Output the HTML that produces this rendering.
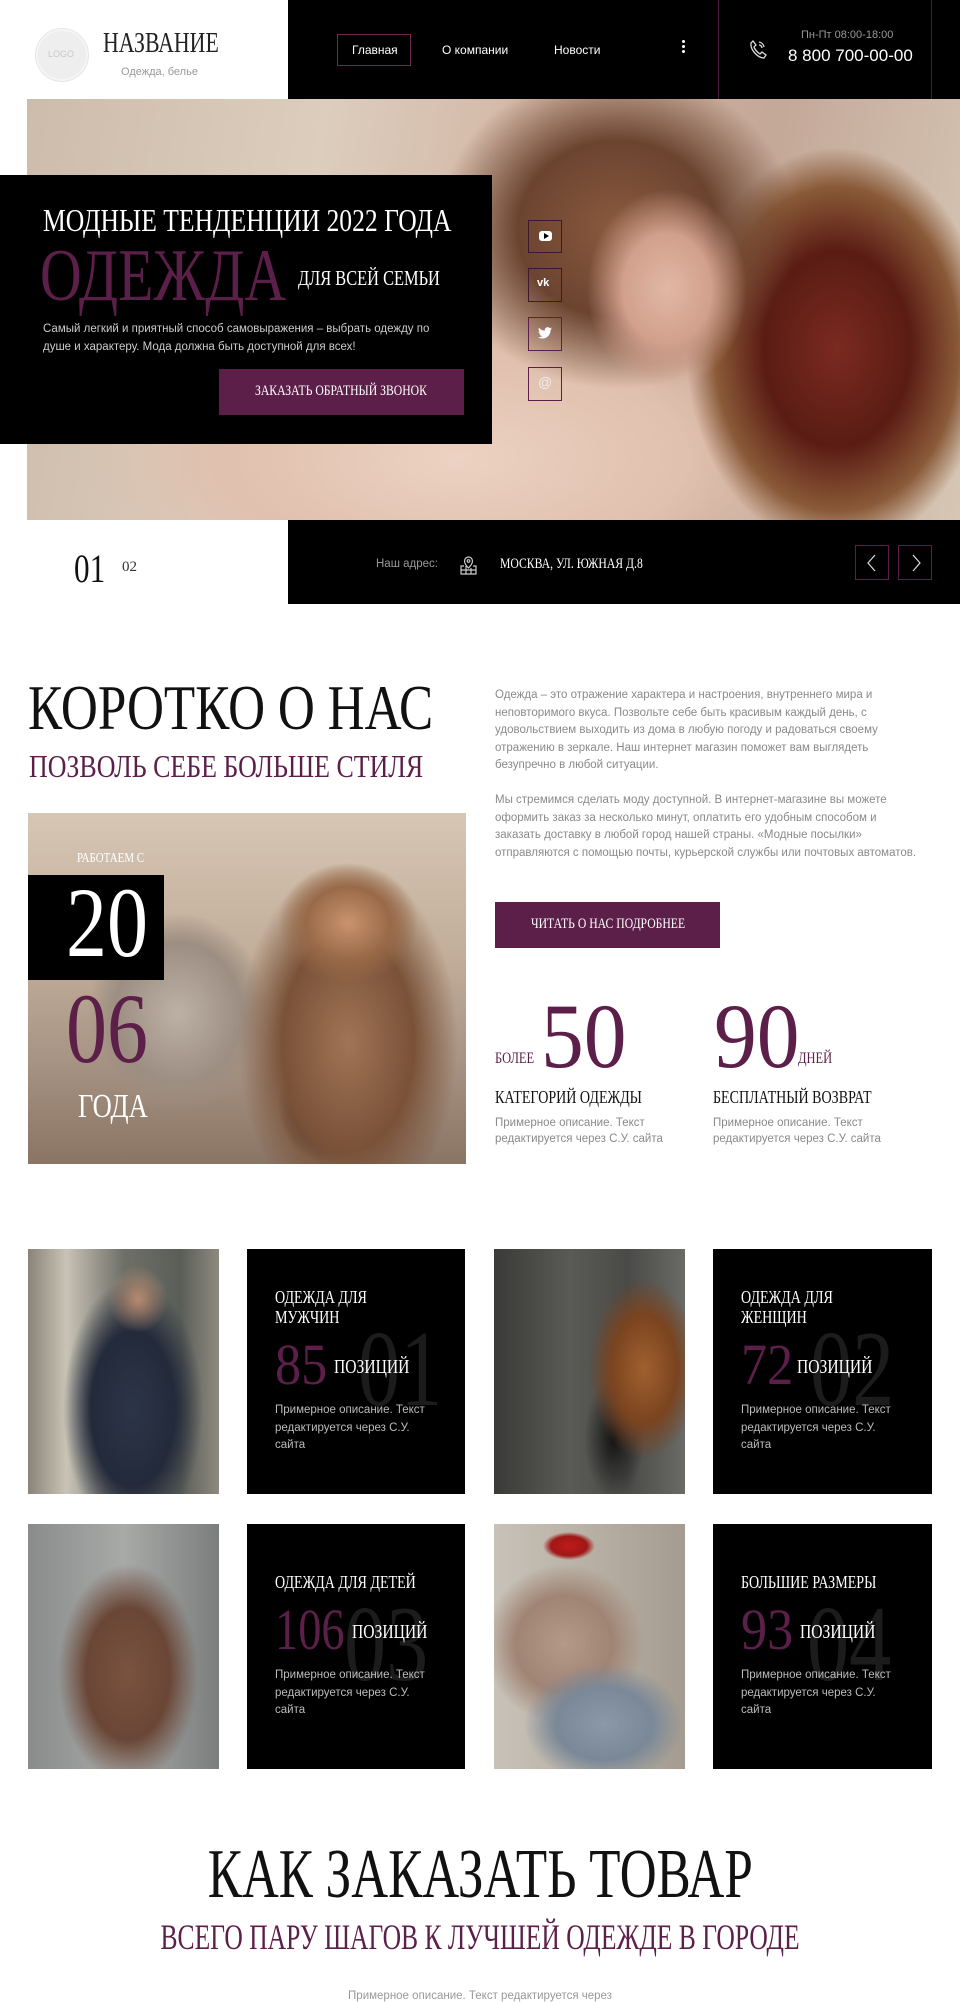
<!DOCTYPE html>
<html><head><meta charset="utf-8">
<style>
*{margin:0;padding:0;box-sizing:border-box}
body{width:960px;height:2000px;overflow:hidden;background:#fff;font-family:"Liberation Sans","Noto Sans CJK SC",sans-serif;position:relative}
.a{position:absolute}
.s{font-family:"Liberation Serif","Noto Serif CJK SC",serif;white-space:nowrap}
.c{display:inline-block;transform:scaleX(.78);transform-origin:0 50%}
.p{color:#5c1f49}
.g{color:#8a8a8a;font-size:11.5px;line-height:17.6px;white-space:nowrap}
.box{border:1px solid #5c1f49}
.card{background:#000}
</style></head><body>

<!-- header -->
<div class="a" style="left:0;top:0;width:288px;height:99px;background:#fff"></div>
<div class="a" style="left:36px;top:29px;width:52px;height:52px;border-radius:50%;background:#eee;border:2px solid #f5f5f5;box-shadow:0 0 0 1px #e6e6e6"></div>
<div class="a" style="left:48px;top:49px;font-size:9px;color:#c8c8c8">LOGO</div>
<div class="a s" style="left:103px;top:28px;font-size:28px;color:#222"><span class="c">НАЗВАНИЕ</span></div>
<div class="a" style="left:121px;top:66px;font-size:11px;color:#999">Одежда, белье</div>
<div class="a" style="left:288px;top:0;width:672px;height:99px;background:#000"></div>
<div class="a box" style="left:337px;top:34px;width:74px;height:32px;border-color:#6b2a52"></div>
<div class="a" style="left:352px;top:43px;font-size:12px;color:#fff">Главная</div>
<div class="a" style="left:442px;top:43px;font-size:12px;color:#fff">О компании</div>
<div class="a" style="left:554px;top:43px;font-size:12px;color:#fff">Новости</div>
<div class="a" style="left:682px;top:40px;width:3px;height:3px;background:#fff;border-radius:50%;box-shadow:0 5px 0 #fff,0 10px 0 #fff"></div>
<div class="a" style="left:718px;top:0;width:214px;height:99px;border-left:1px solid #4a1a3c;border-right:1px solid #4a1a3c"></div>
<svg class="a" style="left:749px;top:39px" width="18" height="20" viewBox="0 0 18 20" fill="none" stroke="#ddd" stroke-width="1.3"><path d="M4 2l3 4-2 2c1 3 3 5 6 7l2-2 4 3-2 3C9 19 1 11 2 4z"/><path d="M10 3a6 6 0 0 1 5 5M10 6a3 3 0 0 1 3 3"/></svg>
<div class="a" style="left:801px;top:29px;font-size:11px;color:#999">Пн-Пт 08:00-18:00</div>
<div class="a" style="left:788px;top:46px;font-size:17px;color:#fff">8 800 700-00-00</div>

<!-- hero image -->
<div class="a" style="left:27px;top:99px;width:933px;height:421px;overflow:hidden;background:
radial-gradient(ellipse 80px 100px at 640px 190px,#e0b8a4 0%,#d2a08c 55%,rgba(0,0,0,0) 100%),
radial-gradient(ellipse 180px 160px at 590px 130px,#8a5a3e 0%,#6b4430 55%,rgba(0,0,0,0) 100%),
radial-gradient(ellipse 210px 280px at 810px 250px,#7a2a20 0%,#5a1c14 35%,#8a5a38 58%,rgba(0,0,0,0) 72%),
radial-gradient(ellipse 380px 170px at 430px 360px,#ecd2c2 0%,#e0c0ae 60%,rgba(0,0,0,0) 100%),
linear-gradient(100deg,#cdbcab 0%,#dccdbd 30%,#d2b2a0 55%,#c4a898 75%,#d6c6b4 100%)"></div>

<!-- hero black box -->
<div class="a" style="left:0;top:175px;width:492px;height:269px;background:#000"></div>
<div class="a s" style="left:43px;top:202px;font-size:32px;color:#fff"><span class="c" style="transform:scaleX(.8)">МОДНЫЕ ТЕНДЕНЦИИ 2022 ГОДА</span></div>
<div class="a s p" style="left:40px;top:236px;font-size:74px;line-height:80px;color:#5c1f49"><span class="c" style="transform:scaleX(.78)">ОДЕЖДА</span></div>
<div class="a s" style="left:298px;top:266px;font-size:21px;color:#fff"><span class="c">ДЛЯ ВСЕЙ СЕМЬИ</span></div>
<div class="a" style="left:43px;top:320px;font-size:11.5px;line-height:18px;color:#ccc;white-space:nowrap">Самый легкий и приятный способ самовыражения – выбрать одежду по<br>душе и характеру. Мода должна быть доступной для всех!</div>
<div class="a" style="left:219px;top:369px;width:245px;height:46px;background:#5c1f49"></div>
<div class="a s" style="left:255px;top:383px;font-size:15px;color:#fff"><span class="c">ЗАКАЗАТЬ ОБРАТНЫЙ ЗВОНОК</span></div>

<!-- socials -->
<div class="a box" style="left:528px;top:220px;width:34px;height:33px;border-color:#3a1a2c"></div>
<div class="a" style="left:539px;top:231px;width:13px;height:10px;background:#fff;border-radius:3px"></div>
<div class="a" style="left:544px;top:233px;width:0;height:0;border-left:5px solid #000;border-top:3px solid transparent;border-bottom:3px solid transparent"></div>
<div class="a box" style="left:528px;top:268px;width:34px;height:34px;border-color:#3a1a2c"></div>
<div class="a" style="left:537px;top:277px;font-size:11px;font-weight:bold;color:#fff">vk</div>
<div class="a box" style="left:528px;top:317px;width:34px;height:34px"></div>
<svg class="a" style="left:538px;top:327px" width="14" height="12" viewBox="0 0 24 20"><path fill="#fff" d="M24 2.4a10 10 0 0 1-2.8.8A5 5 0 0 0 23.3.5a10 10 0 0 1-3.1 1.2A4.9 4.9 0 0 0 11.8 6 14 14 0 0 1 1.7.9a4.9 4.9 0 0 0 1.5 6.6A4.9 4.9 0 0 1 1 6.9a4.9 4.9 0 0 0 3.9 4.8 5 5 0 0 1-2.2.1 4.9 4.9 0 0 0 4.6 3.4A9.9 9.9 0 0 1 0 17.3 14 14 0 0 0 7.5 19.5c9 0 14-7.5 14-14v-.6A10 10 0 0 0 24 2.4z"/></svg>
<div class="a box" style="left:528px;top:367px;width:34px;height:34px"></div>
<div class="a" style="left:538px;top:374px;font-size:14px;color:#eee">@</div>

<!-- hero bottom bar -->
<div class="a s" style="left:74px;top:545px;font-size:40px;color:#111"><span class="c">01</span></div>
<div class="a s" style="left:122px;top:559px;font-size:15px;color:#333">02</div>
<div class="a" style="left:288px;top:520px;width:672px;height:84px;background:#000"></div>
<div class="a" style="left:376px;top:558px;font-size:11.5px;color:#999">Наш адрес:</div>
<svg class="a" style="left:459px;top:555px" width="19" height="20" viewBox="0 0 19 20" fill="none" stroke="#ccc" stroke-width="1.2"><path d="M9.5 2a4 4 0 0 1 4 4c0 3-4 7-4 7s-4-4-4-7a4 4 0 0 1 4-4z"/><circle cx="9.5" cy="6" r="1.3"/><path d="M5 11H2v8h15v-8h-3M2 15h15M7 11v8M12 13v6"/></svg>
<div class="a s" style="left:500px;top:556px;font-size:15px;color:#fff"><span class="c">МОСКВА, УЛ. ЮЖНАЯ Д.8</span></div>
<div class="a box" style="left:855px;top:545px;width:34px;height:35px"></div>
<div class="a box" style="left:898px;top:545px;width:34px;height:35px"></div>
<svg class="a" style="left:865px;top:553px" width="14" height="20" fill="none" stroke="#ddd" stroke-width="1.2"><path d="M10 2L3 10l7 8"/></svg>
<svg class="a" style="left:909px;top:553px" width="14" height="20" fill="none" stroke="#ddd" stroke-width="1.2"><path d="M4 2l7 8-7 8"/></svg>

<!-- about -->
<div class="a s" style="left:28px;top:672px;font-size:64px;line-height:72px;color:#111"><span class="c" style="transform:scaleX(.8)">КОРОТКО О НАС</span></div>
<div class="a s p" style="left:29px;top:746px;font-size:32px;line-height:40px"><span class="c" style="transform:scaleX(.81)">ПОЗВОЛЬ СЕБЕ БОЛЬШЕ СТИЛЯ</span></div>
<div class="a" style="left:28px;top:813px;width:438px;height:351px;overflow:hidden;background:
radial-gradient(ellipse 70px 60px at 320px 110px,#c9936e 0%,#9a6a48 60%,rgba(0,0,0,0) 100%),
radial-gradient(ellipse 110px 180px at 320px 230px,#a07456 0%,#7a5238 60%,rgba(0,0,0,0) 100%),
radial-gradient(ellipse 50px 60px at 300px 290px,#2a2420 0%,#3a3230 70%,rgba(0,0,0,0) 100%),
radial-gradient(ellipse 90px 100px at 150px 200px,#bdb0a4 0%,#9c8e82 70%,rgba(0,0,0,0) 100%),
linear-gradient(180deg,#d6c6b4 0%,#c2ae9a 40%,#a89484 70%,#8a7464 100%)"></div>
<div class="a s" style="left:77px;top:851px;font-size:14px;color:#fff"><span class="c">РАБОТАЕМ С</span></div>
<div class="a" style="left:28px;top:875px;width:136px;height:105px;background:#000"></div>
<div class="a s" style="left:66px;top:870px;font-size:100px;line-height:106px;color:#fff"><span class="c" style="transform:scaleX(.82)">20</span></div>
<div class="a s p" style="left:66px;top:976px;font-size:100px;line-height:106px"><span class="c" style="transform:scaleX(.82)">06</span></div>
<div class="a s" style="left:78px;top:1087px;font-size:34px;line-height:40px;color:#fff"><span class="c">ГОДА</span></div>

<div class="a g" style="left:495px;top:687px">Одежда – это отражение характера и настроения, внутреннего мира и<br>неповторимого вкуса. Позвольте себе быть красивым каждый день, с<br>удовольствием выходить из дома в любую погоду и радоваться своему<br>отражению в зеркале. Наш интернет магазин поможет вам выглядеть<br>безупречно в любой ситуации.</div>
<div class="a g" style="left:495px;top:792px">Мы стремимся сделать моду доступной. В интернет-магазине вы можете<br>оформить заказ за несколько минут, оплатить его удобным способом и<br>заказать доставку в любой город нашей страны. «Модные посылки»<br>отправляются с помощью почты, курьерской службы или почтовых автоматов.</div>
<div class="a" style="left:495px;top:902px;width:225px;height:46px;background:#5c1f49"></div>
<div class="a s" style="left:531px;top:916px;font-size:15px;color:#fff"><span class="c">ЧИТАТЬ О НАС ПОДРОБНЕЕ</span></div>

<div class="a s p" style="left:495px;top:1050px;font-size:16px"><span class="c">БОЛЕЕ</span></div>
<div class="a s p" style="left:541px;top:990px;font-size:92px;line-height:92px"><span class="c" style="transform:scaleX(.93)">50</span></div>
<div class="a s p" style="left:714px;top:990px;font-size:92px;line-height:92px"><span class="c" style="transform:scaleX(.93)">90</span></div>
<div class="a s p" style="left:798px;top:1050px;font-size:16px"><span class="c">ДНЕЙ</span></div>
<div class="a s" style="left:495px;top:1087px;font-size:18px;color:#111"><span class="c">КАТЕГОРИЙ ОДЕЖДЫ</span></div>
<div class="a s" style="left:713px;top:1087px;font-size:18px;color:#111"><span class="c">БЕСПЛАТНЫЙ ВОЗВРАТ</span></div>
<div class="a g" style="left:495px;top:1115px;line-height:16px">Примерное описание. Текст<br>редактируется через С.У. сайта</div>
<div class="a g" style="left:713px;top:1115px;line-height:16px">Примерное описание. Текст<br>редактируется через С.У. сайта</div>

<!-- cards -->
<div class="a" style="left:28px;top:1249px;width:191px;height:245px;background:
radial-gradient(ellipse 30px 34px at 110px 50px,#b88a70 0%,rgba(0,0,0,0) 100%),
radial-gradient(ellipse 70px 130px at 105px 160px,#2c3548 0%,#232a3a 60%,rgba(0,0,0,0) 100%),
linear-gradient(90deg,#8a8478 0%,#c9c3b6 20%,#6e7068 50%,#5a5e58 80%,#8e8a80 100%)"></div>
<div class="a" style="left:494px;top:1249px;width:191px;height:245px;background:
radial-gradient(ellipse 55px 90px at 150px 120px,#a0602e 0%,#7a4420 60%,rgba(0,0,0,0) 100%),
radial-gradient(ellipse 30px 60px at 120px 190px,#141414 0%,rgba(0,0,0,0) 100%),
linear-gradient(90deg,#3a3a38 0%,#5a5a56 40%,#4a4a48 70%,#6a6a66 100%)"></div>
<div class="a" style="left:28px;top:1524px;width:191px;height:245px;background:
radial-gradient(ellipse 70px 110px at 100px 150px,#7a5240 0%,#6a4636 60%,rgba(0,0,0,0) 100%),
linear-gradient(90deg,#8a8c8c 0%,#a8aaa8 50%,#7c7e7e 100%)"></div>
<div class="a" style="left:494px;top:1524px;width:191px;height:245px;background:
radial-gradient(ellipse 26px 14px at 75px 22px,#c01a1a 0%,#a01818 70%,rgba(0,0,0,0) 100%),
radial-gradient(ellipse 80px 60px at 110px 200px,#8a98a8 0%,#7a8898 60%,rgba(0,0,0,0) 100%),
radial-gradient(ellipse 80px 80px at 70px 120px,#b49888 0%,#a08474 60%,rgba(0,0,0,0) 100%),
linear-gradient(90deg,#c8c2b8 0%,#b8b0a4 50%,#a49c90 100%)"></div>

<div class="a card" style="left:247px;top:1249px;width:218px;height:245px"></div>
<div class="a card" style="left:713px;top:1249px;width:219px;height:245px"></div>
<div class="a card" style="left:247px;top:1524px;width:218px;height:245px"></div>
<div class="a card" style="left:713px;top:1524px;width:219px;height:245px"></div>

<div class="a s" style="left:358px;top:1315px;font-size:108px;line-height:110px;color:#1c1c1c"><span class="c">01</span></div>
<div class="a s" style="left:810px;top:1315px;font-size:108px;line-height:110px;color:#1c1c1c"><span class="c">02</span></div>
<div class="a s" style="left:344px;top:1590px;font-size:108px;line-height:110px;color:#1c1c1c"><span class="c">03</span></div>
<div class="a s" style="left:807px;top:1590px;font-size:108px;line-height:110px;color:#1c1c1c"><span class="c">04</span></div>

<div class="a s" style="left:275px;top:1287px;font-size:18px;line-height:20px;color:#fff"><span class="c">ОДЕЖДА ДЛЯ<br>МУЖЧИН</span></div>
<div class="a s p" style="left:275px;top:1335px;font-size:58px;line-height:60px"><span class="c" style="transform:scaleX(.9)">85</span></div>
<div class="a s" style="left:334px;top:1356px;font-size:20px;color:#fff"><span class="c">ПОЗИЦИЙ</span></div>
<div class="a" style="left:275px;top:1402px;font-size:11.5px;line-height:17.5px;color:#bbb;white-space:nowrap">Примерное описание. Текст<br>редактируется через С.У.<br>сайта</div>

<div class="a s" style="left:741px;top:1287px;font-size:18px;line-height:20px;color:#fff"><span class="c">ОДЕЖДА ДЛЯ<br>ЖЕНЩИН</span></div>
<div class="a s p" style="left:741px;top:1335px;font-size:58px;line-height:60px"><span class="c" style="transform:scaleX(.9)">72</span></div>
<div class="a s" style="left:797px;top:1356px;font-size:20px;color:#fff"><span class="c">ПОЗИЦИЙ</span></div>
<div class="a" style="left:741px;top:1402px;font-size:11.5px;line-height:17.5px;color:#bbb;white-space:nowrap">Примерное описание. Текст<br>редактируется через С.У.<br>сайта</div>

<div class="a s" style="left:275px;top:1572px;font-size:18px;line-height:20px;color:#fff"><span class="c">ОДЕЖДА ДЛЯ ДЕТЕЙ</span></div>
<div class="a s p" style="left:275px;top:1600px;font-size:58px;line-height:60px"><span class="c" style="transform:scaleX(.8)">106</span></div>
<div class="a s" style="left:352px;top:1621px;font-size:20px;color:#fff"><span class="c">ПОЗИЦИЙ</span></div>
<div class="a" style="left:275px;top:1667px;font-size:11.5px;line-height:17.5px;color:#bbb;white-space:nowrap">Примерное описание. Текст<br>редактируется через С.У.<br>сайта</div>

<div class="a s" style="left:741px;top:1572px;font-size:18px;line-height:20px;color:#fff"><span class="c">БОЛЬШИЕ РАЗМЕРЫ</span></div>
<div class="a s p" style="left:741px;top:1600px;font-size:58px;line-height:60px"><span class="c" style="transform:scaleX(.9)">93</span></div>
<div class="a s" style="left:800px;top:1621px;font-size:20px;color:#fff"><span class="c">ПОЗИЦИЙ</span></div>
<div class="a" style="left:741px;top:1667px;font-size:11.5px;line-height:17.5px;color:#bbb;white-space:nowrap">Примерное описание. Текст<br>редактируется через С.У.<br>сайта</div>

<!-- how to order -->
<div class="a s" style="left:0;top:1835px;width:960px;text-align:center;font-size:70px;line-height:80px;color:#111"><span class="c" style="transform:scaleX(.73);transform-origin:50% 50%">КАК ЗАКАЗАТЬ ТОВАР</span></div>
<div class="a s p" style="left:0;top:1915px;width:960px;text-align:center;font-size:36px;line-height:44px"><span class="c" style="transform:scaleX(.71);transform-origin:50% 50%">ВСЕГО ПАРУ ШАГОВ К ЛУЧШЕЙ ОДЕЖДЕ В ГОРОДЕ</span></div>
<div class="a" style="left:0;top:1990px;width:960px;text-align:center;font-size:11.5px;color:#999">Примерное описание. Текст редактируется через</div>
</body></html>
